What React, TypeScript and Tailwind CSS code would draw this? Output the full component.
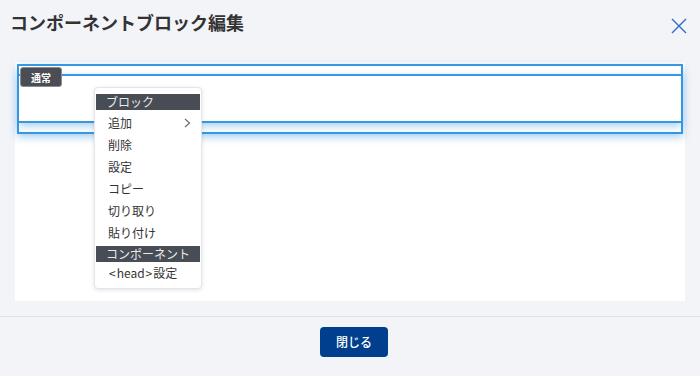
import React from "react";

const font = { fontFamily: '"Noto Sans CJK JP", "Noto Sans", sans-serif' };

function MenuHeader({ children }: { children: React.ReactNode }) {
  return (
    <div className="h-[16px] bg-[#474c55] pl-[10px] text-[12px] leading-[16px] text-[#e8e9ec]">
      {children}
    </div>
  );
}

function MenuItem({ children, arrow }: { children: React.ReactNode; arrow?: boolean }) {
  return (
    <div className="flex h-[22px] items-center justify-between pl-[12px] pr-[9px] text-[12px] text-[#333]">
      <span>{children}</span>
      {arrow && (
        <svg width="7" height="10" viewBox="0 0 7 10" fill="none">
          <path d="M1 1l4.5 4L1 9" stroke="#666" strokeWidth="1.1" />
        </svg>
      )}
    </div>
  );
}

export default function App() {
  return (
    <div style={font} className="flex h-[376px] w-[700px] flex-col bg-[#f3f4f8]">
      <div className="flex h-[62px] items-start justify-between pl-[10px] pr-[13px] pt-[10px]">
        <h1 className="text-[18px] font-bold leading-[24px] text-[#333]">コンポーネントブロック編集</h1>
        <svg className="mt-[8px]" width="16" height="16" viewBox="0 0 16 16" fill="none">
          <path d="M1 1l14 14M15 1L1 15" stroke="#2d6bc4" strokeWidth="1.4" />
        </svg>
      </div>
      <div className="relative mx-[15px] h-[239px] bg-white p-[2px]">
        <div className="relative h-[70px] border-2 border-[#3797e0] shadow-[0_3px_8px_rgba(55,151,224,0.45)]">
          <div className="mt-[8px] h-[49px] border-y-2 border-[#3797e0] shadow-[0_3px_8px_rgba(55,151,224,0.45)]" />
          <div className="absolute left-[1px] top-[1px] flex h-[20px] w-[42px] items-center justify-center rounded-[3px] border border-[#8a8d93] bg-[#4a4d54] text-[10px] font-bold text-white">
            通常
          </div>
        </div>
        <div className="absolute left-[79px] top-[25px] w-[108px] rounded-[4px] border border-[#e3e5ea] bg-white px-[1px] pb-[4px] pt-[6px] shadow-[0_1px_4px_rgba(0,0,0,0.12)]">
          <MenuHeader>ブロック</MenuHeader>
          <div className="h-[2px]" />
          <MenuItem arrow>追加</MenuItem>
          <MenuItem>削除</MenuItem>
          <MenuItem>設定</MenuItem>
          <MenuItem>コピー</MenuItem>
          <MenuItem>切り取り</MenuItem>
          <MenuItem>貼り付け</MenuItem>
          <div className="h-[2px]" />
          <MenuHeader>コンポーネント</MenuHeader>
          <MenuItem>
            <span className="mx-[1px]">&lt;</span>head<span className="mx-[1px]">&gt;</span>設定
          </MenuItem>
        </div>
      </div>
      <div className="mt-[15px] flex justify-center border-t border-[#dde1e7] pt-[10px]">
        <button className="ml-[8px] h-[30px] w-[68px] rounded-[4px] bg-[#003f8e] text-[12px] font-medium text-white">
          閉じる
        </button>
      </div>
    </div>
  );
}
